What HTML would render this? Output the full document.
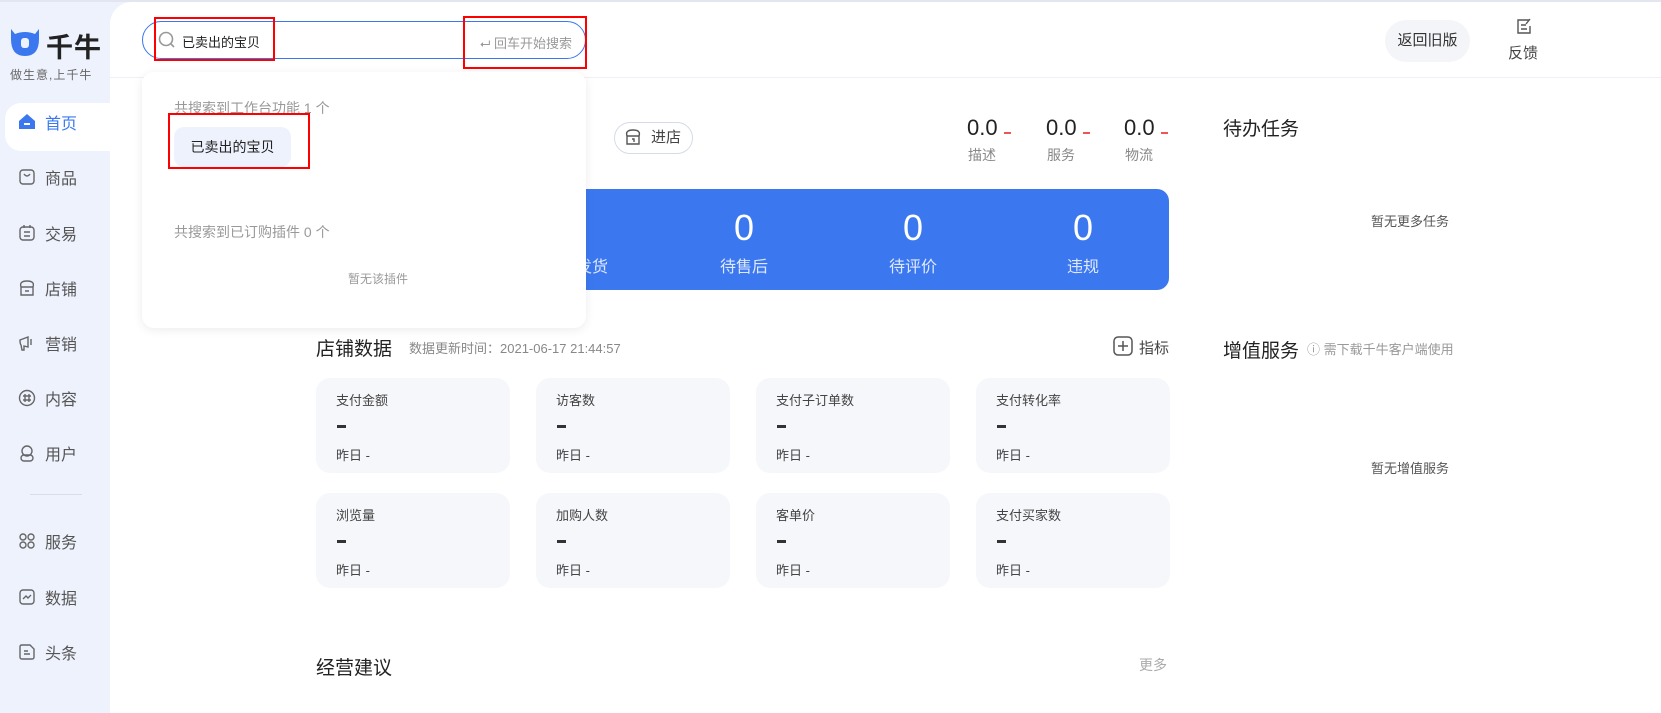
<!DOCTYPE html>
<html><head><meta charset="utf-8"><style>
*{margin:0;padding:0;box-sizing:border-box}
body{width:1661px;height:713px;overflow:hidden;background:#eef2fd;font-family:"Liberation Sans","Noto Sans CJK SC",sans-serif;position:relative;color:#333}
.abs{position:absolute}
.main{left:110px;top:2px;width:1551px;height:711px;background:#fff;border-top-left-radius:22px}
.topline{left:0;top:0;width:1661px;height:2px;background:#e3e6ee}
.hdr{left:110px;top:77px;width:1551px;height:1px;background:#eef0f5}
.nav{left:18px;font-size:16px;color:#555;display:flex;align-items:center;gap:9px}
.nav svg{width:18px;height:18px}
.card{background:#f6f7fa;border-radius:14px;width:194px;height:95px}
.card .t{position:absolute;left:20px;top:12px;font-size:13px;color:#444}
.card .d{position:absolute;left:21px;top:47px;width:9px;height:3px;background:#333}
.card .y{position:absolute;left:20px;top:67px;font-size:13px;color:#444}
</style></head><body>
<div class="abs topline"></div>
<div class="abs main"></div>
<div class="abs hdr"></div>
<svg class="abs" style="left:9px;top:27px" width="32" height="32" viewBox="0 0 32 32"><path d="M2 2 L6 7 Q16 3 26 7 L30 2 L30 12 Q30 29 16 29 Q2 29 2 12Z" fill="#3b78f0"/><rect x="12" y="11" width="8" height="10" rx="3" fill="#eef2fd"/></svg>
<div class="abs" style="left:46px;top:26px;font-size:27px;font-weight:bold;color:#222;letter-spacing:1px">千牛</div>
<div class="abs" style="left:10px;top:66px;font-size:12px;color:#666;letter-spacing:1px">做生意,上千牛</div>
<div class="abs" style="left:5px;top:103px;width:110px;height:48px;background:#fff;border-radius:16px 0 0 16px"></div>
<div class="abs nav" style="top:110px;color:#3b78f0"><svg viewBox="0 0 18 18"><path d="M9 1 L17 8 V16 H1 V8Z" fill="#3b78f0"/><rect x="6" y="10" width="6" height="2" fill="#fff"/></svg>首页</div>
<div class="abs nav" style="top:165px"><svg viewBox="0 0 18 18" fill="none" stroke="#666" stroke-width="1.4"><rect x="2" y="2" width="14" height="14" rx="3"/><path d="M6 6 Q9 10 12 6"/></svg>商品</div>
<div class="abs nav" style="top:221px"><svg viewBox="0 0 18 18" fill="none" stroke="#666" stroke-width="1.4"><rect x="2" y="3" width="14" height="13" rx="3"/><path d="M6 1v3M12 1v3M6 8h6M6 12h6"/></svg>交易</div>
<div class="abs nav" style="top:276px"><svg viewBox="0 0 18 18" fill="none" stroke="#666" stroke-width="1.4"><path d="M3 8 Q1 2 9 2 Q17 2 15 8 V16 H3Z M3 8h12 M7 12h4"/></svg>店铺</div>
<div class="abs nav" style="top:331px"><svg viewBox="0 0 18 18" fill="none" stroke="#666" stroke-width="1.4"><path d="M2 6 L10 3 V13 L6 12 V16 H4 L3 11 Q2 10 2 6Z M13 5 v6"/></svg>营销</div>
<div class="abs nav" style="top:386px"><svg viewBox="0 0 18 18" fill="none" stroke="#666" stroke-width="1.4"><circle cx="9" cy="9" r="7.5"/><path d="M7 5v8M11 5v8M5 7h8M5 11h8"/></svg>内容</div>
<div class="abs nav" style="top:441px"><svg viewBox="0 0 18 18" fill="none" stroke="#666" stroke-width="1.4"><circle cx="9" cy="7" r="5"/><rect x="3" y="11" width="12" height="6" rx="3"/></svg>用户</div>
<div class="abs" style="left:30px;top:494px;width:52px;height:1px;background:#d8dde8"></div>
<div class="abs nav" style="top:529px"><svg viewBox="0 0 18 18" fill="none" stroke="#666" stroke-width="1.4"><circle cx="5" cy="5" r="3"/><circle cx="13" cy="5" r="3"/><circle cx="5" cy="13" r="3"/><circle cx="13" cy="13" r="3"/></svg>服务</div>
<div class="abs nav" style="top:585px"><svg viewBox="0 0 18 18" fill="none" stroke="#666" stroke-width="1.4"><rect x="2" y="2" width="14" height="14" rx="3"/><path d="M5 11 L8 8 L10 10 L13 7"/></svg>数据</div>
<div class="abs nav" style="top:640px"><svg viewBox="0 0 18 18" fill="none" stroke="#666" stroke-width="1.4"><path d="M2 4 Q2 2 4 2 H12 L16 6 V14 Q16 16 14 16 H4 Q2 16 2 14Z M6 8h4M6 11h6"/></svg>头条</div>
<div class="abs" style="left:142px;top:21px;width:444px;height:38px;border:1px solid #3b78f0;border-radius:19px;background:#fff"></div>
<svg class="abs" style="left:158px;top:31px" width="18" height="18" viewBox="0 0 18 18" fill="none" stroke="#999" stroke-width="1.6"><circle cx="8" cy="8" r="6.5"/><path d="M13 13l3 3"/></svg>
<div class="abs" style="left:182px;top:32px;font-size:13px;color:#222">已卖出的宝贝</div>
<div class="abs" style="left:480px;top:33px;font-size:13px;color:#999">⮠ 回车开始搜索</div>
<div class="abs" style="left:154px;top:17px;width:121px;height:44px;border:2px solid #f00"></div>
<div class="abs" style="left:463px;top:16px;width:124px;height:53px;border:2px solid #f00"></div>
<div class="abs" style="left:1385px;top:20px;width:85px;height:42px;border-radius:21px;background:#f4f5f8;font-size:15px;color:#333;text-align:center;line-height:42px">返回旧版</div>
<svg class="abs" style="left:1515px;top:17px" width="18" height="18" viewBox="0 0 18 18" fill="none" stroke="#555" stroke-width="1.4"><path d="M14 3 H3 V16 H15 V9 M6 8h5M6 12h6 M15 2 L11 7"/></svg>
<div class="abs" style="left:1508px;top:42px;font-size:15px;color:#444">反馈</div>
<div class="abs" style="left:614px;top:122px;width:79px;height:32px;border:1px solid #d6dbe6;border-radius:16px;font-size:15px;color:#444;line-height:30px;padding-left:36px">进店</div>
<svg class="abs" style="left:624px;top:128px" width="18" height="18" viewBox="0 0 18 18" fill="none" stroke="#555" stroke-width="1.4"><path d="M3 8 Q1 2 9 2 Q17 2 15 8 V16 H3Z M3 8h12 M8 11h2v3"/></svg>
<div class="abs" style="left:967px;top:115px;font-size:22px;color:#222">0.0</div><div class="abs" style="left:1004px;top:132px;width:7px;height:2px;background:#e55"></div><div class="abs" style="left:968px;top:145px;font-size:14px;color:#888">描述</div>
<div class="abs" style="left:1046px;top:115px;font-size:22px;color:#222">0.0</div><div class="abs" style="left:1083px;top:132px;width:7px;height:2px;background:#e55"></div><div class="abs" style="left:1047px;top:145px;font-size:14px;color:#888">服务</div>
<div class="abs" style="left:1124px;top:115px;font-size:22px;color:#222">0.0</div><div class="abs" style="left:1161px;top:132px;width:7px;height:2px;background:#e55"></div><div class="abs" style="left:1125px;top:145px;font-size:14px;color:#888">物流</div>
<div class="abs" style="left:316px;top:189px;width:853px;height:101px;background:#3b78f0;border-radius:12px"></div>
<div class="abs" style="left:560px;top:253px;font-size:16px;color:#dfe8fc">待发货</div>
<div class="abs" style="left:714px;top:207px;width:60px;text-align:center;font-size:36px;color:#fff">0</div><div class="abs" style="left:714px;top:253px;width:60px;text-align:center;font-size:16px;color:#dfe8fc">待售后</div>
<div class="abs" style="left:883px;top:207px;width:60px;text-align:center;font-size:36px;color:#fff">0</div><div class="abs" style="left:883px;top:253px;width:60px;text-align:center;font-size:16px;color:#dfe8fc">待评价</div>
<div class="abs" style="left:1053px;top:207px;width:60px;text-align:center;font-size:36px;color:#fff">0</div><div class="abs" style="left:1053px;top:253px;width:60px;text-align:center;font-size:16px;color:#dfe8fc">违规</div>
<div class="abs" style="left:316px;top:334px;font-size:19px;color:#222">店铺数据</div>
<div class="abs" style="left:409px;top:338px;font-size:13px;color:#888">数据更新时间：2021-06-17 21:44:57</div>
<svg class="abs" style="left:1113px;top:336px" width="20" height="20" viewBox="0 0 20 20" fill="none" stroke="#555" stroke-width="1.5"><rect x="1" y="1" width="18" height="18" rx="4"/><path d="M10 5v10M5 10h10"/></svg>
<div class="abs" style="left:1139px;top:337px;font-size:15px;color:#444">指标</div>
<div class="abs card" style="left:316px;top:378px"><div class="t">支付金额</div><div class="d"></div><div class="y">昨日 -</div></div>
<div class="abs card" style="left:536px;top:378px"><div class="t">访客数</div><div class="d"></div><div class="y">昨日 -</div></div>
<div class="abs card" style="left:756px;top:378px"><div class="t">支付子订单数</div><div class="d"></div><div class="y">昨日 -</div></div>
<div class="abs card" style="left:976px;top:378px"><div class="t">支付转化率</div><div class="d"></div><div class="y">昨日 -</div></div>
<div class="abs card" style="left:316px;top:493px"><div class="t">浏览量</div><div class="d"></div><div class="y">昨日 -</div></div>
<div class="abs card" style="left:536px;top:493px"><div class="t">加购人数</div><div class="d"></div><div class="y">昨日 -</div></div>
<div class="abs card" style="left:756px;top:493px"><div class="t">客单价</div><div class="d"></div><div class="y">昨日 -</div></div>
<div class="abs card" style="left:976px;top:493px"><div class="t">支付买家数</div><div class="d"></div><div class="y">昨日 -</div></div>
<div class="abs" style="left:316px;top:653px;font-size:19px;color:#222">经营建议</div>
<div class="abs" style="left:1139px;top:655px;font-size:14px;color:#aaa">更多</div>
<div class="abs" style="left:1223px;top:114px;font-size:19px;color:#222">待办任务</div>
<div class="abs" style="left:1371px;top:211px;font-size:13px;color:#555">暂无更多任务</div>
<div class="abs" style="left:1223px;top:336px;font-size:19px;color:#222">增值服务</div>
<div class="abs" style="left:1307px;top:339px;font-size:13px;color:#999">ⓘ 需下载千牛客户端使用</div>
<div class="abs" style="left:1371px;top:458px;font-size:13px;color:#555">暂无增值服务</div>
<div class="abs" style="left:142px;top:72px;width:444px;height:256px;background:#fff;border-radius:12px;box-shadow:0 2px 10px rgba(0,0,0,0.08)"></div>
<div class="abs" style="left:174px;top:98px;font-size:14px;color:#999">共搜索到工作台功能 1 个</div>
<div class="abs" style="left:174px;top:127px;width:117px;height:40px;background:#eef2fd;border-radius:10px;font-size:14px;color:#222;line-height:40px;text-align:center">已卖出的宝贝</div>
<div class="abs" style="left:168px;top:113px;width:142px;height:56px;border:2px solid #f00"></div>
<div class="abs" style="left:174px;top:222px;font-size:14px;color:#999">共搜索到已订购插件 0 个</div>
<div class="abs" style="left:348px;top:270px;font-size:12px;color:#999">暂无该插件</div>
</body></html>
